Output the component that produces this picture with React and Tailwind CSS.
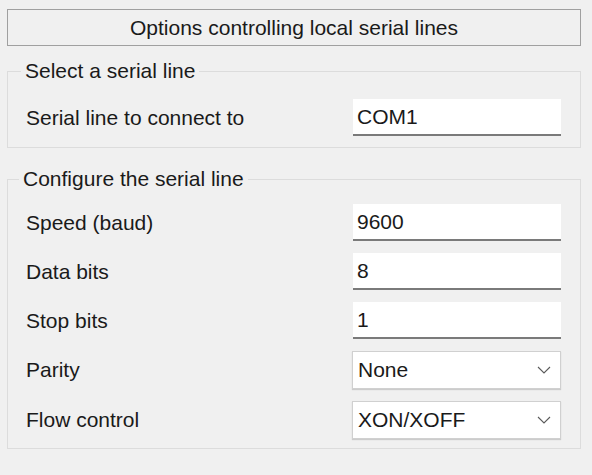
import React from 'react';

const font = { fontFamily: '"Segoe UI", "Liberation Sans", Arial, sans-serif' };

const Chevron = () => (
  <svg width="14" height="8" viewBox="0 0 14 8" className="shrink-0">
    <path d="M1 1 L7 7 L13 1" fill="none" stroke="#5a5a5a" strokeWidth="1.1" />
  </svg>
);

const TextRow = ({ label, value }) => (
  <div className="flex items-center justify-between h-[37px]">
    <span className="pl-[18px] text-[21px] text-[#1a1a1a]">{label}</span>
    <div className="w-[208px] h-[37px] bg-white border-b-2 border-[#7a7a7a] flex items-center pl-[4px] text-[21px] text-[#1a1a1a]">
      {value}
    </div>
  </div>
);

const SelectRow = ({ label, value }) => (
  <div className="flex items-center justify-between h-[38px]">
    <span className="pl-[18px] text-[21px] text-[#1a1a1a]">{label}</span>
    <div className="w-[209px] h-[38px] bg-white border border-[#d0d0d0] shadow-[0_1px_1px_rgba(0,0,0,0.15)] flex items-center justify-between pl-[5px] pr-[9px] text-[21px] text-[#1a1a1a]">
      <span>{value}</span>
      <Chevron />
    </div>
  </div>
);

export default function App() {
  return (
    <div className="w-[592px] h-[475px] bg-[#f0f0f0] pt-[9px] px-[7px]" style={font}>
      <div className="w-[574px] h-[37px] border border-[#a0a0a0] flex items-center justify-center text-[21px] text-[#1a1a1a]">
        Options controlling local serial lines
      </div>

      <fieldset className="mt-[14px] w-[574px] border border-[#dcdcdc] pr-[19px] pb-[11px]">
        <legend className="ml-[13px] px-[4px] text-[21px] leading-[22px] text-[#1a1a1a]">Select a serial line</legend>
        <div className="pt-[17px]">
          <TextRow label="Serial line to connect to" value="COM1" />
        </div>
      </fieldset>

      <fieldset className="mt-[20px] w-[574px] border border-[#dcdcdc] pr-[19px] pb-[9px]">
        <legend className="ml-[11px] px-[4px] text-[21px] leading-[22px] text-[#1a1a1a]">Configure the serial line</legend>
        <div className="pt-[14px] flex flex-col gap-[12px]">
          <TextRow label="Speed (baud)" value="9600" />
          <TextRow label="Data bits" value="8" />
          <TextRow label="Stop bits" value="1" />
          <SelectRow label="Parity" value="None" />
          <SelectRow label="Flow control" value="XON/XOFF" />
        </div>
      </fieldset>
    </div>
  );
}
